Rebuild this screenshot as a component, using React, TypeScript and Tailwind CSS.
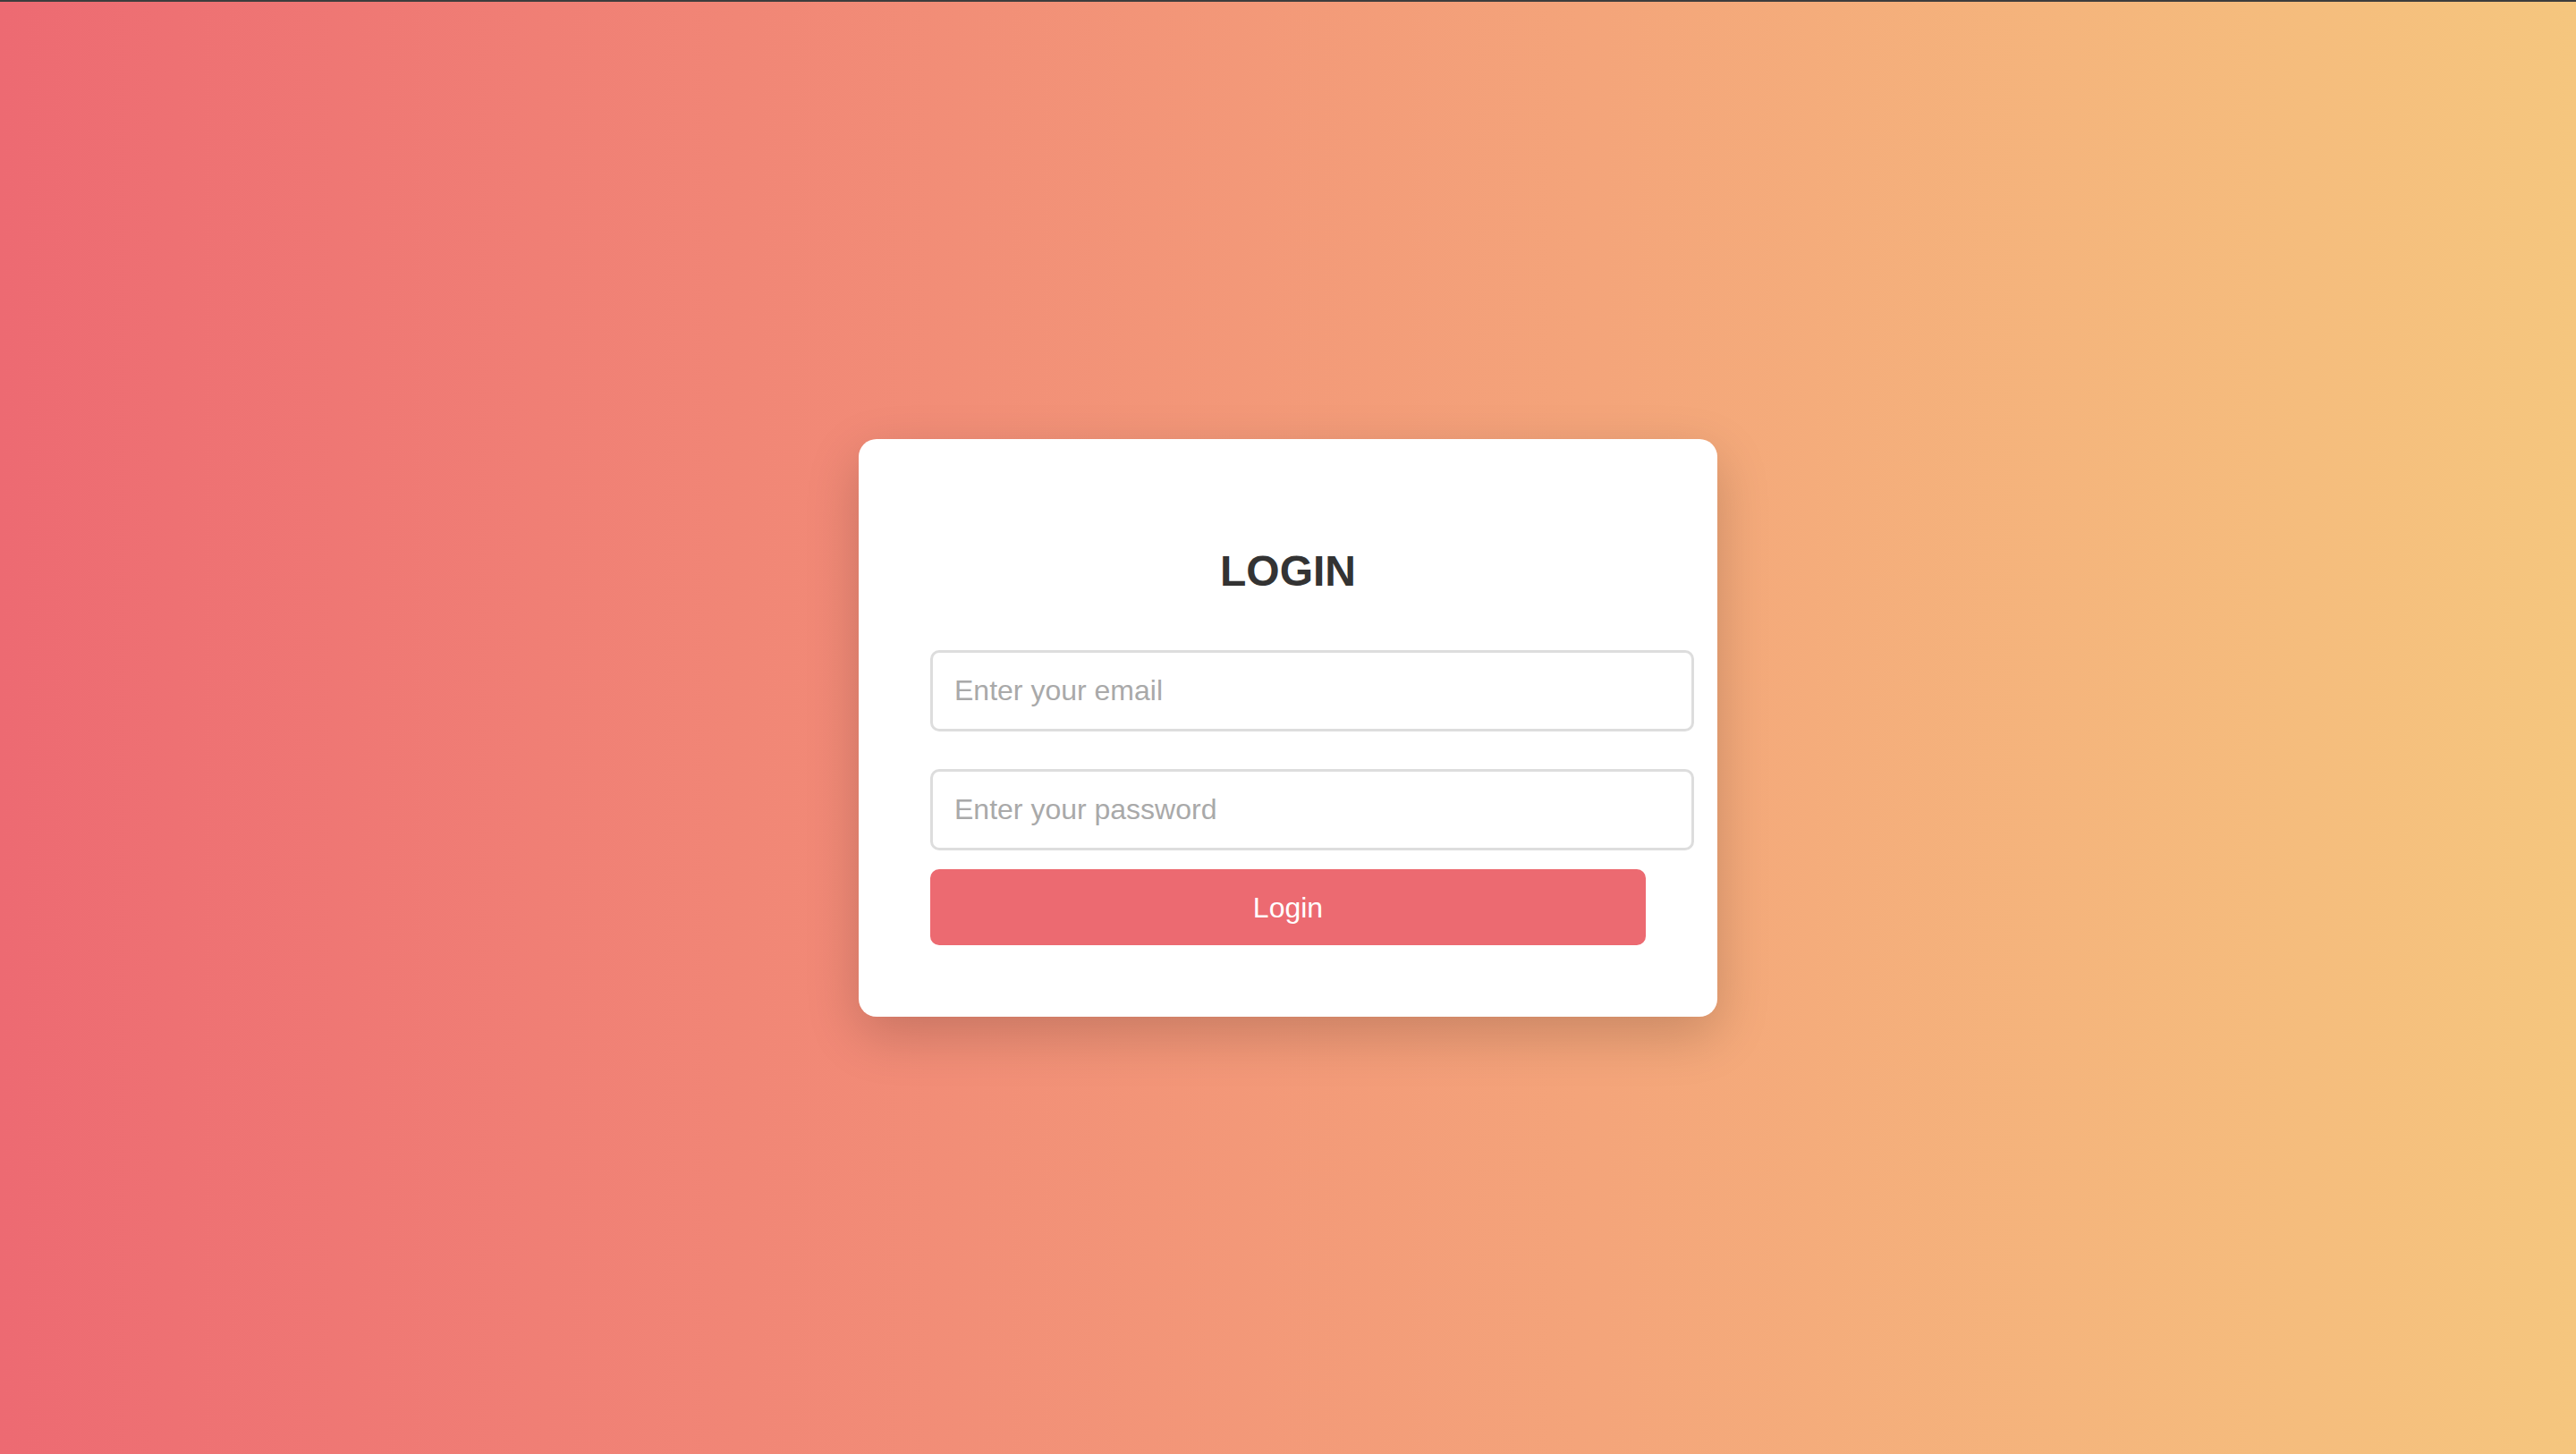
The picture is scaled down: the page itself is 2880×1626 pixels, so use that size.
import { useState } from 'react';

const LoginCard = () => {
  const [email, setEmail] = useState('');
  const [password, setPassword] = useState('');

  const submit = (e: React.FormEvent) => {
    e.preventDefault();
    console.log('login', email);
  };

  return (
    <form
      onSubmit={submit}
      className="w-[960px] bg-white rounded-[20px] px-[80px] pt-[80px] pb-[80px] flex flex-col shadow-[0_20px_60px_rgba(0,0,0,0.18)]"
    >
      <h2 className="mt-[40px] text-center text-[48px] leading-[55px] font-bold text-[#333]">LOGIN</h2>
      <input
        type="email"
        value={email}
        onChange={(e) => setEmail(e.target.value)}
        placeholder="Enter your email"
        className="mt-[61px] w-[854px] h-[91px] px-[24px] border-[3px] border-[#ddd] rounded-[10px] text-[32px] text-[#333] placeholder:text-[#a9a9a9] outline-none"
      />
      <input
        type="password"
        value={password}
        onChange={(e) => setPassword(e.target.value)}
        placeholder="Enter your password"
        className="mt-[42px] w-[854px] h-[91px] px-[24px] border-[3px] border-[#ddd] rounded-[10px] text-[32px] text-[#333] placeholder:text-[#a9a9a9] outline-none"
      />
      <button
        type="submit"
        className="mt-[21px] w-[800px] h-[85px] bg-[#ec6a71] text-white text-[32px] rounded-[10px] cursor-pointer"
      >
        Login
      </button>
    </form>
  );
};

export default function App() {
  return (
    <div className="w-full min-h-screen flex flex-col font-['Liberation_Sans',Arial,sans-serif]">
      <div className="h-[2px] bg-[#3d3d3d]" />
      <div className="flex-1 flex items-center justify-center bg-gradient-to-r from-[#ed6a72] to-[#f5c67e]">
        <LoginCard />
      </div>
    </div>
  );
}
